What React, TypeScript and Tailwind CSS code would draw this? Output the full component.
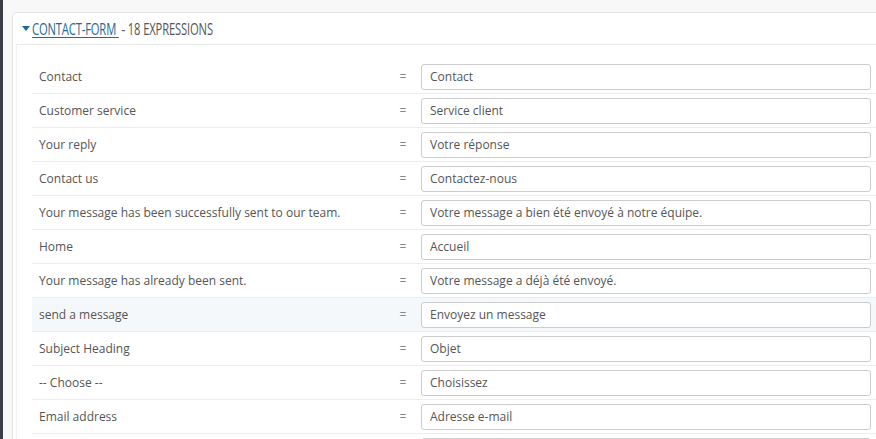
const rows: [string, string][] = [
  ["Contact", "Contact"],
  ["Customer service", "Service client"],
  ["Your reply", "Votre réponse"],
  ["Contact us", "Contactez-nous"],
  ["Your message has been successfully sent to our team.", "Votre message a bien été envoyé à notre équipe."],
  ["Home", "Accueil"],
  ["Your message has already been sent.", "Votre message a déjà été envoyé."],
  ["send a message", "Envoyez un message"],
  ["Subject Heading", "Objet"],
  ["-- Choose --", "Choisissez"],
  ["Email address", "Adresse e-mail"],
  ["Order reference", "Référence de commande"],
];

export default function App() {
  return (
    <div className="flex h-[439px] w-[876px] overflow-hidden bg-[#f8f8f8] font-['Open_Sans',sans-serif]">
      <div className="w-[3px] shrink-0 bg-[#3a3d43]" />
      <div className="flex-1 pl-[9px] pt-[12px]">
        <div className="w-[900px] rounded-[5px] border border-[#e4e4e4] bg-white px-[3px]">
          <div className="flex h-[32px] items-center border-b border-[#eaeaea] pl-[6px] text-[16px] uppercase text-[#555]">
            <svg width="8" height="6" viewBox="0 0 8 6" className="mr-[2px] shrink-0">
              <path d="M0 0h8L4 5z" fill="#1b6b93" />
            </svg>
            <span className="inline-block origin-left scale-x-[0.7] whitespace-nowrap tracking-[-0.2px]">
              <a href="#" className="text-[#1b6b93] underline underline-offset-2">
                CONTACT-FORM&nbsp;
              </a>
              <span>&nbsp;- 18 EXPRESSIONS</span>
            </span>
          </div>
          <div className="border-l border-[#f2f2f2] pl-[15px] pt-[15px]">
            {rows.map(([en, fr], i) => (
              <div
                key={i}
                className={`flex h-[34px] items-center border-b border-[#eaedef] text-[12px] text-[#555] ${
                  i === 7 ? "bg-[#f5f8fa]" : ""
                }`}
              >
                <div className="w-[364px] pl-[7px]">{en}</div>
                <div className="w-[14px] text-center text-[#888]">=</div>
                <input
                  defaultValue={fr}
                  className="ml-[11px] h-[26px] w-[450px] rounded-[3px] border border-[#cccccc] bg-white pl-[8px] text-[12px] text-[#555] outline-none"
                />
              </div>
            ))}
          </div>
        </div>
      </div>
    </div>
  );
}
